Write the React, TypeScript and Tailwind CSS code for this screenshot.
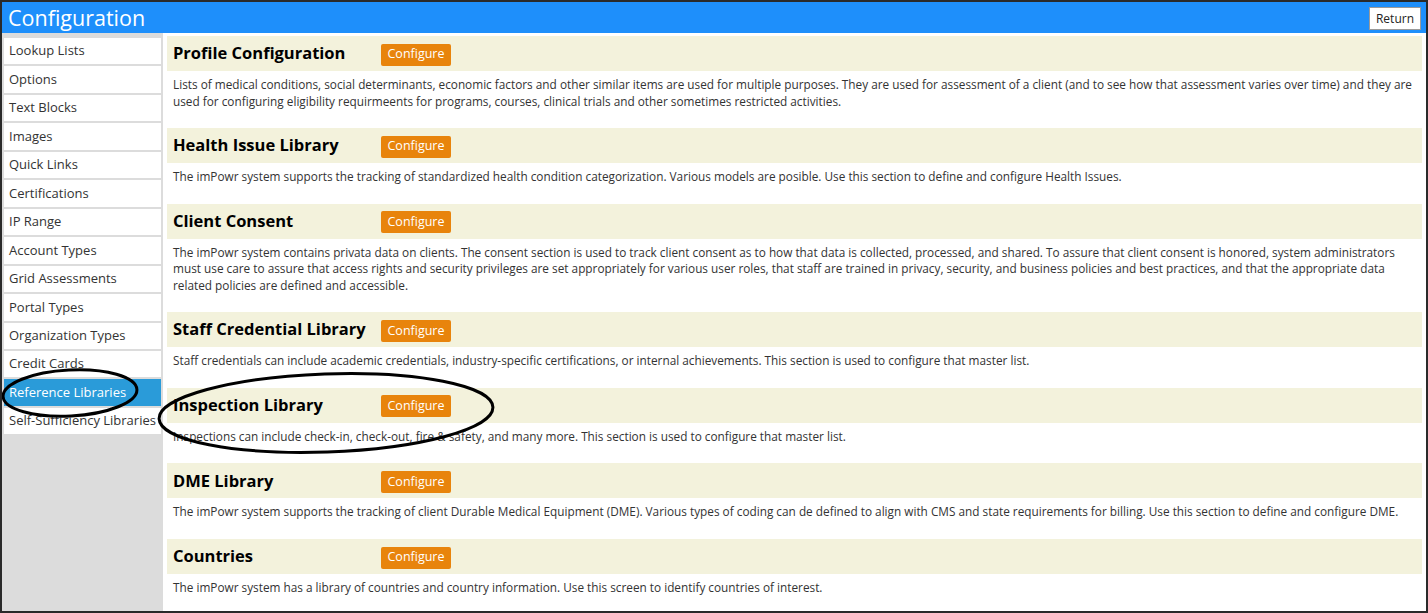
import React from "react";

const navItems = [
  "Lookup Lists",
  "Options",
  "Text Blocks",
  "Images",
  "Quick Links",
  "Certifications",
  "IP Range",
  "Account Types",
  "Grid Assessments",
  "Portal Types",
  "Organization Types",
  "Credit Cards",
  "Reference Libraries",
  "Self-Sufficiency Libraries",
];

const sections: { title: string; lines: string[] }[] = [
  {
    title: "Profile Configuration",
    lines: [
      "Lists of medical conditions, social determinants, economic factors and other similar items are used for multiple purposes. They are used for assessment of a client (and to see how that assessment varies over time) and they are",
      "used for configuring eligibility requirmeents for programs, courses, clinical trials and other sometimes restricted activities.",
    ],
  },
  {
    title: "Health Issue Library",
    lines: [
      "The imPowr system supports the tracking of standardized health condition categorization. Various models are posible. Use this section to define and configure Health Issues.",
    ],
  },
  {
    title: "Client Consent",
    lines: [
      "The imPowr system contains privata data on clients. The consent section is used to track client consent as to how that data is collected, processed, and shared. To assure that client consent is honored, system administrators",
      "must use care to assure that access rights and security privileges are set appropriately for various user roles, that staff are trained in privacy, security, and business policies and best practices, and that the appropriate data",
      "related policies are defined and accessible.",
    ],
  },
  {
    title: "Staff Credential Library",
    lines: [
      "Staff credentials can include academic credentials, industry-specific certifications, or internal achievements. This section is used to configure that master list.",
    ],
  },
  {
    title: "Inspection Library",
    lines: [
      "Inspections can include check-in, check-out, fire & safety, and many more. This section is used to configure that master list.",
    ],
  },
  {
    title: "DME Library",
    lines: [
      "The imPowr system supports the tracking of client Durable Medical Equipment (DME). Various types of coding can de defined to align with CMS and state requirements for billing. Use this section to define and configure DME.",
    ],
  },
  {
    title: "Countries",
    lines: [
      "The imPowr system has a library of countries and country information. Use this screen to identify countries of interest.",
    ],
  },
];

export default function App() {
  return (
    <div
      className="relative w-[1428px] h-[613px] overflow-hidden border-2 border-[#2a2a2a] bg-white flex flex-col text-[#222]"
      style={{ fontFamily: '"Open Sans", "Noto Sans", sans-serif' }}
    >
      {/* Title bar */}
      <div className="h-[31px] shrink-0 bg-[#1e8ffb] flex items-center justify-between pl-[6px] pr-[5px]">
        <h1 className="text-[21.5px] leading-none text-white font-normal">Configuration</h1>
        <button className="h-[23px] mt-[2px] px-[6px] bg-white border border-[#9a9a9a] text-[12px] text-[#222] leading-none">
          Return
        </button>
      </div>

      <div className="flex flex-1 min-h-0">
        {/* Side navigation */}
        <nav className="w-[161px] shrink-0 bg-[#dcdcdc] px-[2px] pt-[5px] flex flex-col gap-[2px]">
          {navItems.map((item) => {
            const active = item === "Reference Libraries";
            return (
              <div
                key={item}
                className={
                  active
                    ? "h-[26.46px] shrink-0 flex items-center px-[5px] text-[13px] bg-[#2a9bd9] text-white whitespace-nowrap"
                    : "h-[26.46px] shrink-0 flex items-center px-[5px] text-[13px] bg-white text-[#333] whitespace-nowrap"
                }
              >
                {item}
              </div>
            );
          })}
        </nav>

        {/* Configuration sections */}
        <main className="flex-1 min-w-0 pl-[4px] pr-[4px] pt-[3px]">
          {sections.map((s) => (
            <section key={s.title}>
              <div className="h-[35px] bg-[#f3f2dc] flex items-center px-[6px]">
                <h2 className="w-[208px] shrink-0 text-[16.5px] font-bold text-black whitespace-nowrap">
                  {s.title}
                </h2>
                <button className="w-[70px] h-[22px] mt-[2px] rounded-[2px] bg-[#e8840c] text-white text-[12.5px] leading-none">
                  Configure
                </button>
              </div>
              <div className="px-[6px] pt-[5px] pb-[19.1px] text-[11.8px] leading-[16.5px] text-[#333]">
                {s.lines.map((l, i) => (
                  <div key={i} className="whitespace-nowrap">
                    {l}
                  </div>
                ))}
              </div>
            </section>
          ))}
        </main>
      </div>

      {/* Hand-drawn highlight rings */}
      <svg
        className="absolute inset-0 pointer-events-none"
        width="1428"
        height="613"
        viewBox="0 0 1428 613"
      >
        <ellipse
          cx="68"
          cy="391"
          rx="67"
          ry="23"
          transform="rotate(-3 68 391)"
          fill="none"
          stroke="#000"
          strokeWidth="3"
        />
        <ellipse
          cx="324"
          cy="411"
          rx="167"
          ry="39"
          transform="rotate(-2 324 411)"
          fill="none"
          stroke="#000"
          strokeWidth="3"
        />
      </svg>
    </div>
  );
}
